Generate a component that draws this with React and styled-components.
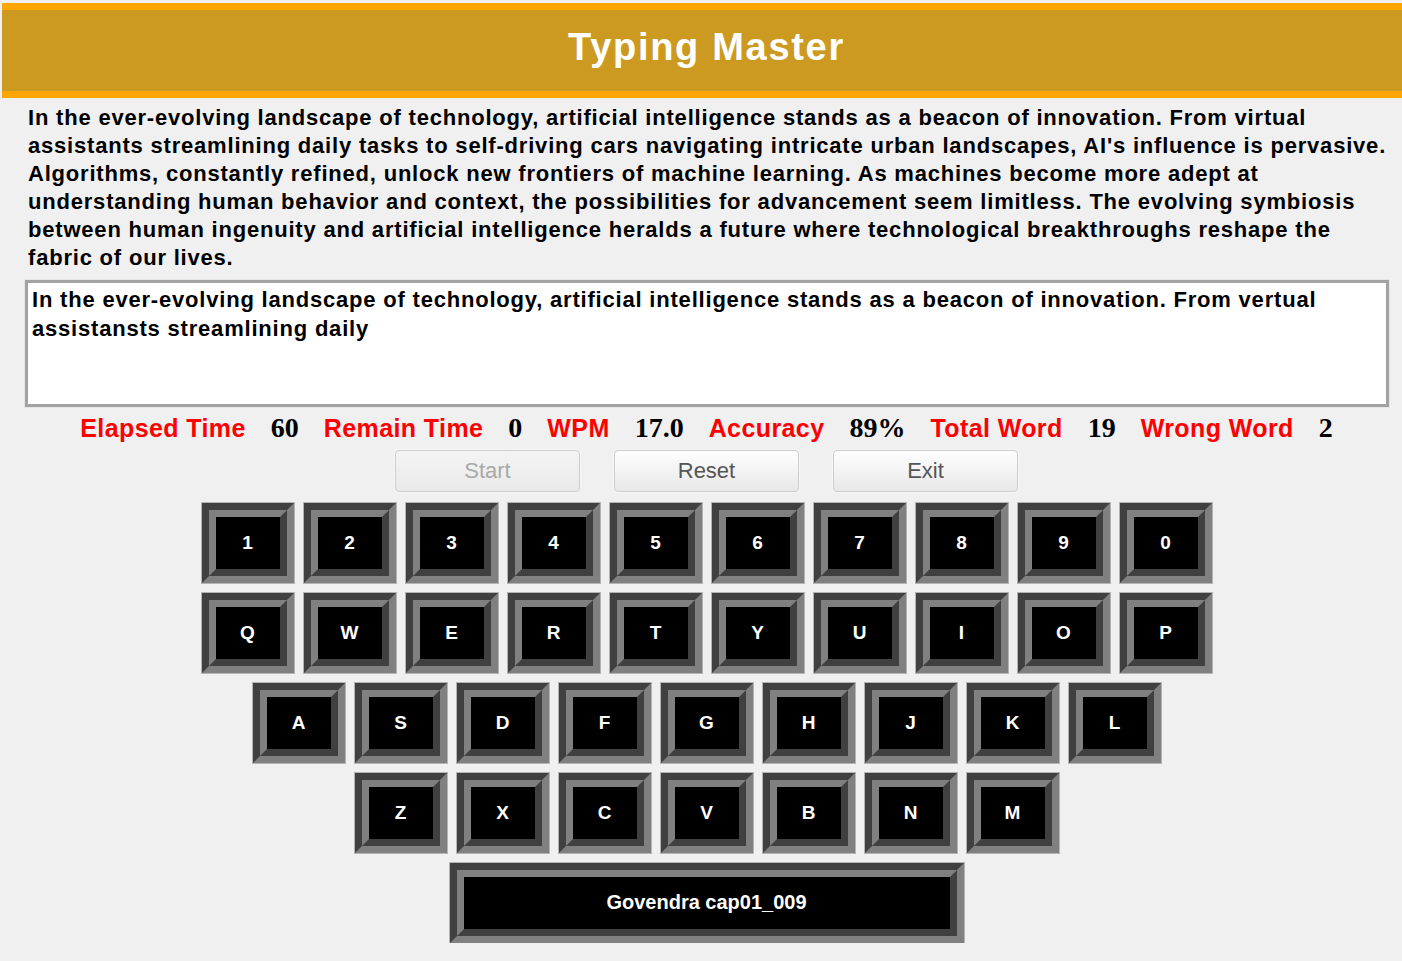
import React from "react";
import styled, { createGlobalStyle } from "styled-components";

const GlobalStyle = createGlobalStyle`
  html, body {
    margin: 0;
    padding: 0;
    background: #f0f0f0;
    overflow: hidden;
  }
  body {
    font-family: "Liberation Sans", Arial, sans-serif;
  }
`;

const Page = styled.div`
  width: 1409px;
  margin-left: 2px;
  padding-top: 3px;
  display: flex;
  flex-direction: column;
  align-items: center;
`;

const Header = styled.header`
  align-self: stretch;
  height: 81px;
  border-top: 7px solid #ffa500;
  border-bottom: 7px solid #ffa500;
  background: #cc9a20;
  display: flex;
  justify-content: center;
`;

const Title = styled.h1`
  margin: 0;
  padding-bottom: 6px;
  font-family: "Liberation Sans", Arial, sans-serif;
  font-weight: 700;
  font-size: 38px;
  letter-spacing: 1.7px;
  line-height: 75px;
  color: #ffffff;
`;

const Passage = styled.p`
  align-self: stretch;
  margin: 6px 16px 0 26px;
  font-size: 22px;
  font-weight: 700;
  letter-spacing: 0.8px;
  line-height: 28.1px;
  color: #000;
`;

const TypeBox = styled.div`
  align-self: stretch;
  margin: 7px 22px 0 23px;
  height: 119px;
  background: #ffffff;
  border: 3px solid #a3a3a3;
  box-shadow: 0 0 0 1px #e6e6e6;
  padding: 2px 8px 0 4px;
  font-size: 22px;
  font-weight: 700;
  letter-spacing: 0.8px;
  line-height: 29px;
  color: #000;
`;

const StatsRow = styled.div`
  margin-top: 5px;
  display: flex;
  align-items: baseline;
  gap: 25px;
  line-height: 32px;
`;

const StatLabel = styled.span`
  font-family: "Liberation Sans", Arial, sans-serif;
  font-weight: 700;
  font-size: 25px;
  letter-spacing: 0.4px;
  color: #ff0000;
`;

const StatValue = styled.span`
  font-family: "Liberation Serif", "Times New Roman", serif;
  font-weight: 700;
  font-size: 28px;
  color: #000;
`;

const ButtonRow = styled.div`
  margin-top: 6px;
  display: flex;
  gap: 34px;
`;

const ActionButton = styled.button`
  width: 185px;
  height: 42px;
  border: 1px solid #cdcdcd;
  border-radius: 4px;
  background: ${(p) =>
    p.disabled
      ? "linear-gradient(#f4f4f4, #e9e9e9)"
      : "linear-gradient(#fefefe, #e8e8e8)"};
  box-shadow: 0 0 0 1px #f7f7f7;
  font-family: "Liberation Sans", Arial, sans-serif;
  font-size: 22px;
  color: ${(p) => (p.disabled ? "#a9a9a9" : "#555555")};
  padding: 0;
  cursor: default;
`;

const Keyboard = styled.div`
  margin-top: 11px;
  display: flex;
  flex-direction: column;
  align-items: center;
  gap: 10px;
`;

const KeyRow = styled.div`
  display: flex;
  gap: 10px;
`;

const Key = styled.div`
  width: ${(p) => (p.$wide ? "514px" : "92px")};
  height: 80px;
  box-sizing: border-box;
  border-style: solid;
  border-width: 7px;
  border-color: #404040 #808080 #808080 #404040;
  box-shadow: 0 0 0 1px #b4b4b4;
  display: flex;
`;

const KeyFace = styled.div`
  flex: 1;
  border-style: solid;
  border-width: 7px;
  border-color: #808080 #404040 #404040 #808080;
  background: #000;
  display: flex;
  align-items: center;
  justify-content: center;
  color: #fff;
  font-family: "Liberation Sans", Arial, sans-serif;
  font-weight: 700;
  font-size: ${(p) => (p.$wide ? "20px" : "19px")};
`;

const rows = [
  ["1", "2", "3", "4", "5", "6", "7", "8", "9", "0"],
  ["Q", "W", "E", "R", "T", "Y", "U", "I", "O", "P"],
  ["A", "S", "D", "F", "G", "H", "J", "K", "L"],
  ["Z", "X", "C", "V", "B", "N", "M"],
];

const stats = [
  ["Elapsed Time", "60"],
  ["Remain Time", "0"],
  ["WPM", "17.0"],
  ["Accuracy", "89%"],
  ["Total Word", "19"],
  ["Wrong Word", "2"],
];

export default function App() {
  return (
    <>
      <GlobalStyle />
      <Page>
        <Header>
          <Title>Typing Master</Title>
        </Header>
        <Passage>
          In the ever-evolving landscape of technology, artificial intelligence
          stands as a beacon of innovation. From virtual assistants streamlining
          daily tasks to self-driving cars navigating intricate urban
          landscapes, AI's influence is pervasive. Algorithms, constantly
          refined, unlock new frontiers of machine learning. As machines become
          more adept at understanding human behavior and context, the
          possibilities for advancement seem limitless. The evolving symbiosis
          between human ingenuity and artificial intelligence heralds a future
          where technological breakthroughs reshape the fabric of our lives.
        </Passage>
        <TypeBox>
          In the ever-evolving landscape of technology, artificial intelligence
          stands as a beacon of innovation. From vertual assistansts
          streamlining daily
        </TypeBox>
        <StatsRow>
          {stats.map(([label, value]) => (
            <React.Fragment key={label}>
              <StatLabel>{label}</StatLabel>
              <StatValue>{value}</StatValue>
            </React.Fragment>
          ))}
        </StatsRow>
        <ButtonRow>
          <ActionButton disabled>Start</ActionButton>
          <ActionButton>Reset</ActionButton>
          <ActionButton>Exit</ActionButton>
        </ButtonRow>
        <Keyboard>
          {rows.map((row, i) => (
            <KeyRow key={i}>
              {row.map((k) => (
                <Key key={k}>
                  <KeyFace>{k}</KeyFace>
                </Key>
              ))}
            </KeyRow>
          ))}
          <KeyRow>
            <Key $wide>
              <KeyFace $wide>Govendra cap01_009</KeyFace>
            </Key>
          </KeyRow>
        </Keyboard>
      </Page>
    </>
  );
}
